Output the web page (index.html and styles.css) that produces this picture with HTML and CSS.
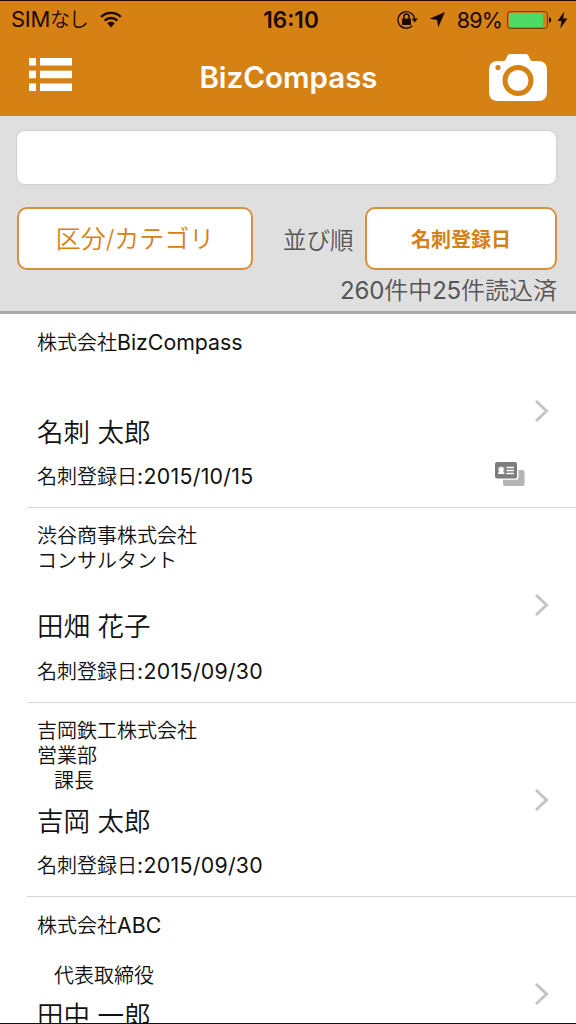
FILE: index.html
```
<!DOCTYPE html>
<html lang="ja">

<head>
    <meta charset="UTF-8">
    <meta name="viewport" content="width=device-width, initial-scale=1.0">
    <title>BizCompass</title>
    <link rel="stylesheet" href="styles.css">
</head>

<body>

    <div class="screen">
        <div class="status-bar">
            <div class="status-left">
                <span class="carrier"><span class="sim">SIM</span>なし</span>
                <svg class="wifi" width="22" height="17" viewBox="0 0 24 18">
                    <g fill="none" stroke="#1a0800" stroke-width="2.6">
                        <path d="M1.3 6.2A15 15 0 0 1 22.7 6.2" />
                        <path d="M5.100 10.200A9.8 9.8 0 0 1 18.900 10.200" />
                    </g>
                    <path fill="#1a0800" d="M7.9 13.2A6 6 0 0 1 16.1 13.2L12 17.600z" />
                </svg>
            </div>
            <div class="clock">16:10</div>
            <div class="status-right">
                <svg width="21" height="20" viewBox="0 0 21 20">
                    <path fill="none" stroke="#1a0800" stroke-width="1.3" d="M15.200 15.800A8.3 8.3 0 1 1 17.6 9.2" />
                    <path fill="#1a0800" d="M14.6 8.6h6.2l-3.1 3.8z" />
                    <rect fill="#1a0800" x="5" y="8.6" width="9" height="6.4" rx="0.6" />
                    <path fill="none" stroke="#1a0800" stroke-width="1.5" d="M6.9 9V6.6a2.6 2.6 0 0 1 5.2 0V9" />
                </svg>
                <svg class="location" width="17" height="17" viewBox="0 0 17 17">
                    <path fill="#1a0800" d="M16 1L9.2 16.5 8 9 0.5 7.8z" />
                </svg>
                <span class="percent">89%</span>
                <svg class="battery" width="45" height="20" viewBox="0 0 45 20">
                    <rect fill="none" stroke="#6b3a05" x="0.6" y="1.6" width="39.8" height="16.8" rx="2.5" />
                    <rect fill="#4cd964" x="2" y="3" width="34" height="14" rx="1" />
                    <path fill="#1a0800" d="M42 7q2.3 1 2.3 3t-2.3 3z" />
                </svg>
                <svg class="bolt" width="11" height="18" viewBox="0 0 11 18">
                    <path fill="#1a0800" d="M7.2 0.5L0.5 10h4L3.2 17.5 10.5 7.4H6.2z" />
                </svg>
            </div>
        </div>

        <div class="nav-bar">
            <svg class="menu-icon" width="43" height="33" viewBox="0 0 43 33" fill="#fff">
                <rect x="0" y="0" width="7" height="7.5" />
                <rect x="11" y="0" width="32" height="7.5" />
                <rect x="0" y="12.7" width="7" height="7.5" />
                <rect x="11" y="12.7" width="32" height="7.5" />
                <rect x="0" y="25.5" width="7" height="7.5" />
                <rect x="11" y="25.5" width="32" height="7.5" />
            </svg>
            <h1>BizCompass</h1>
            <svg class="camera-icon" width="58" height="47" viewBox="0 0 58 47">
                <path fill="#fff" d="M9 7h5.500q1.500 0 2.200-1.500l1.600-3.500Q19.200 0 21.500 0h15Q38.800 0 39.700 2l1.600 3.500Q42 7 43.500 7H49q9 0 9 9v22q0 9-9 9H9q-9 0-9-9V16q0-9 9-9z" />
                <circle cx="29" cy="26.500" r="13" fill="none" stroke="#d68114" stroke-width="5" />
                <circle cx="9" cy="13.500" r="2.600" fill="#d68114" />
            </svg>
        </div>

        <div class="search-panel">
            <input type="text" class="search-input">
            <div class="filter-row">
                <button type="button" class="category-button">区分/カテゴリ</button>
                <span class="sort-label">並び順</span>
                <button type="button" class="sort-button">名刺登録日</button>
            </div>
            <div class="count"><span>260</span>件中<span>25</span>件読込済</div>
        </div>

        <ul class="card-list">
            <li class="card">
                <div class="info">
                    <p>株式会社<span class="latin">BizCompass</span></p>
                    <p></p>
                    <p></p>
                    <h2>名刺 太郎</h2>
                    <p class="date">名刺登録日<span class="latin">:2015/10/15</span></p>
                </div>
                <svg class="card-icon" width="30" height="24" viewBox="0 0 30 24">
                    <rect x="8" y="8" width="21.500" height="16" rx="2" fill="#b4b4b4" />
                    <rect x="-1" y="-1" width="24.500" height="18.800" rx="2.500" fill="#fff" />
                    <rect x="0" y="0" width="22" height="16.500" rx="2" fill="#7d7d7d" />
                    <rect x="3" y="4.500" width="6.500" height="7.500" rx="1.500" fill="#fff" opacity="0.35" />
                    <path fill="#fff" d="M6.200 5a2.600 2.600 0 0 1 1.500 4.700l1.800 1.300v1H3v-1l1.800-1.300A2.600 2.600 0 0 1 6.200 5z" />
                    <path stroke="#fff" stroke-width="1.300" d="M11.500 5.500H19M11.500 8.500H19M11.500 11.500H19" />
                </svg>
                <svg class="arrow" width="16" height="24" viewBox="0 0 16 24">
                    <path d="M2 2l10.500 10L2 22" />
                </svg>
            </li>
            <li class="card">
                <div class="info">
                    <p>渋谷商事株式会社</p>
                    <p>コンサルタント</p>
                    <p></p>
                    <h2>田畑 花子</h2>
                    <p class="date">名刺登録日<span class="latin">:2015/09/30</span></p>
                </div>
                <svg class="arrow" width="16" height="24" viewBox="0 0 16 24">
                    <path d="M2 2l10.500 10L2 22" />
                </svg>
            </li>
            <li class="card">
                <div class="info">
                    <p>吉岡鉄工株式会社</p>
                    <p>営業部</p>
                    <p class="post">課長</p>
                    <h2>吉岡 太郎</h2>
                    <p class="date">名刺登録日<span class="latin">:2015/09/30</span></p>
                </div>
                <svg class="arrow" width="16" height="24" viewBox="0 0 16 24">
                    <path d="M2 2l10.500 10L2 22" />
                </svg>
            </li>
            <li class="card">
                <div class="info">
                    <p>株式会社<span class="latin">ABC</span></p>
                    <p></p>
                    <p class="post">代表取締役</p>
                    <h2>田中 一郎</h2>
                </div>
                <svg class="arrow" width="16" height="24" viewBox="0 0 16 24">
                    <path d="M2 2l10.500 10L2 22" />
                </svg>
            </li>
        </ul>
    </div>

</body>

</html>
```

FILE: styles.css
```
* {
    box-sizing: border-box;
}

body {
    margin: 0;
    font-family: Inter, "Noto Sans CJK JP", sans-serif;
    background-color: #fff;
    color: #111;
}

h1,
h2,
p,
ul {
    margin: 0;
    padding: 0;
    font-weight: normal;
}

svg {
    display: block;
    flex-shrink: 0;
}

.screen {
    width: 576px;
    height: 1024px;
    overflow: hidden;
    border-top: 1px solid #2a0505;
    border-bottom: 1px solid #111;
}

/* status bar */
.status-bar {
    display: grid;
    grid-template-columns: 1fr 80px 1fr;
    align-items: center;
    height: 36px;
    padding: 0 8px 0 11px;
    background-color: #d68114;
    color: #1a0800;
    font-size: 22px;
    line-height: 36px;
}

.status-left,
.status-right {
    display: flex;
    align-items: center;
}

.carrier {
    font-size: 20px;
    font-weight: 350;
    letter-spacing: -1.2px;
}

.sim {
    font-size: 22px;
    font-weight: 400;
    letter-spacing: -0.3px;
}

.wifi {
    margin-left: 12px;
}

.clock {
    padding-left: 3px;
    font-size: 22.5px;
    text-align: center;
    font-weight: 600;
}

.status-right {
    justify-content: flex-end;
}

.location {
    margin: 0 11px;
}

.percent {
    font-size: 21.5px;
    letter-spacing: -0.8px;
}

.battery {
    margin: 0 5px 0 5px;
}

/* header */
.nav-bar {
    display: flex;
    justify-content: space-between;
    align-items: center;
    height: 79px;
    padding: 0 29px;
    background-color: #d68114;
}

.menu-icon {
    margin-bottom: 4px;
}

.nav-bar h1 {
    margin-left: 16px;
    color: #fff;
    font-size: 29.5px;
    font-weight: 600;
}

.camera-icon {
    margin-top: 2px;
}

/* search area */
.search-panel {
    height: 197.5px;
    padding: 15px 19px 0 17px;
    background-color: #dfdfdf;
    border-bottom: 3px solid #aaa;
}

.search-input {
    display: block;
    width: 539px;
    height: 53px;
    border: none;
    border-radius: 8px;
    background-color: #fff;
    box-shadow: 0 0 1px 1px #d0d0d0;
}

.filter-row {
    display: flex;
    align-items: center;
    margin-top: 23px;
}

.category-button,
.sort-button {
    height: 63px;
    padding: 0;
    border: 2px solid #d98f38;
    border-radius: 10px;
    background-color: #fff;
    color: #d68114;
    font-family: inherit;
}

.category-button {
    width: 236px;
    padding-bottom: 3px;
    font-size: 25px;
    font-weight: 350;
}

.sort-label {
    width: 70px;
    margin: 0 12px 0 30px;
    color: #555;
    font-size: 23.5px;
    font-weight: 350;
    white-space: nowrap;
}

.sort-button {
    width: 192px;
    font-size: 20px;
    font-weight: bold;
}

.count {
    margin-top: 3px;
    color: #555;
    font-size: 24px;
    font-weight: 350;
    line-height: 35px;
    text-align: right;
    white-space: nowrap;
}

.count span {
    font-weight: 400;
    letter-spacing: -0.2px;
}

/* business card list */
.card-list {
    list-style: none;
}

.card {
    position: relative;
    height: 194.5px;
    margin-left: 27px;
    padding: 16px 0 0 10px;
    border-bottom: 1px solid #d6d6d6;
}

.info p {
    height: 25.3px;
    font-size: 20px;
    font-weight: 350;
    line-height: 25px;
}

.info h2 {
    height: 38px;
    margin-top: 7.5px;
    font-size: 26.5px;
    font-weight: 350;
    line-height: 38px;
}

.info .date {
    margin-top: 13.5px;
}

.info .post {
    padding-left: 17px;
}

.info .latin {
    font-size: 21.3px;
    font-weight: 400;
}

.date .latin {
    letter-spacing: 0.3px;
}

/* icons on the right edge of a card */
.arrow {
    position: absolute;
    top: 85px;
    right: 26px;
}

.arrow path {
    fill: none;
    stroke: #c4c4c7;
    stroke-width: 3;
}

.card-icon {
    position: absolute;
    top: 148.5px;
    right: 51px;
}
```
